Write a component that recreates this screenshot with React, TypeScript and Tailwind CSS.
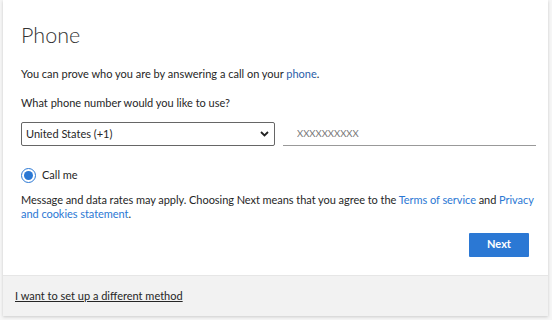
import React, { useState } from "react";

const font = { fontFamily: 'Lato, "Noto Sans", sans-serif' };

export default function App() {
    const [country, setCountry] = useState("US");
    const [method, setMethod] = useState(true);

    return (
        <div className="w-[552px] h-[320px] bg-[#f6f6f6] text-[11px] text-[#262626]" style={font}>
            <div className="ml-[3px] w-[545px] h-[316px] bg-white shadow-[0_1px_3px_rgba(0,0,0,0.18)] flex flex-col">
                <div className="flex-1 pl-[18px] pr-[12px] pt-[20px]">
                    <h1 className="text-[21.5px] font-light text-[#333] leading-[30px]">Phone</h1>
                    <p className="mt-[16px] leading-[16px]">
                        You can prove who you are by answering a call on your{" "}
                        <span className="text-[#2b5ea8]">phone</span>.
                    </p>
                    <p className="mt-[13px] leading-[16px]">What phone number would you like to use?</p>

                    <div className="mt-[11px] flex items-center gap-[8px]">
                        <div className="relative w-[254px] h-[24px] shrink-0">
                            <select
                                value={country}
                                onChange={(e) => setCountry(e.target.value)}
                                className="appearance-none w-full h-full border border-[#666] rounded-[2px] bg-white pl-[4px] pr-[20px] text-[11px] text-[#262626] outline-none"
                                style={font}
                            >
                                <option value="US">United States (+1)</option>
                                <option value="CA">Canada (+1)</option>
                                <option value="GB">United Kingdom (+44)</option>
                            </select>
                            <svg className="absolute right-[6px] top-[9px] pointer-events-none" width="9" height="6" viewBox="0 0 9 6">
                                <path d="M1 1l3.5 3.5L8 1" fill="none" stroke="#222" strokeWidth="1.8" />
                            </svg>
                        </div>
                        <input
                            placeholder="XXXXXXXXXX"
                            className="w-[253px] shrink-0 h-[24px] border-b border-[#999] px-[14px] text-[9.5px] outline-none placeholder:text-[#767676]"
                            style={font}
                        />
                    </div>

                    <label className="mt-[21px] flex items-center gap-[6px] cursor-pointer">
                        <span
                            onClick={() => setMethod(true)}
                            className="w-[15px] h-[15px] rounded-full border border-[#2b78d4] flex items-center justify-center"
                        >
                            {method && <span className="w-[9px] h-[9px] rounded-full bg-[#2b78d4]" />}
                        </span>
                        <span>Call me</span>
                    </label>

                    <p className="mt-[9px] leading-[14px] tracking-[-0.05px]">
                        Message and data rates may apply. Choosing Next means that you agree to the{" "}
                        <a className="text-[#2b78d4]">Terms of service</a> and{" "}
                        <a className="text-[#2b78d4]">Privacy and cookies statement</a>.
                    </p>

                    <div className="mt-[12px] flex justify-end pr-[7px]">
                        <button className="w-[60px] h-[24px] bg-[#2b78d4] text-white text-[11px] font-bold rounded-[1px]" style={font}>
                            Next
                        </button>
                    </div>
                </div>
                <div className="h-[41px] bg-[#f2f2f2] border-t border-[#e6e6e6] flex items-center px-[12px]">
                    <a className="underline text-[#262626]">I want to set up a different method</a>
                </div>
            </div>
        </div>
    );
}
